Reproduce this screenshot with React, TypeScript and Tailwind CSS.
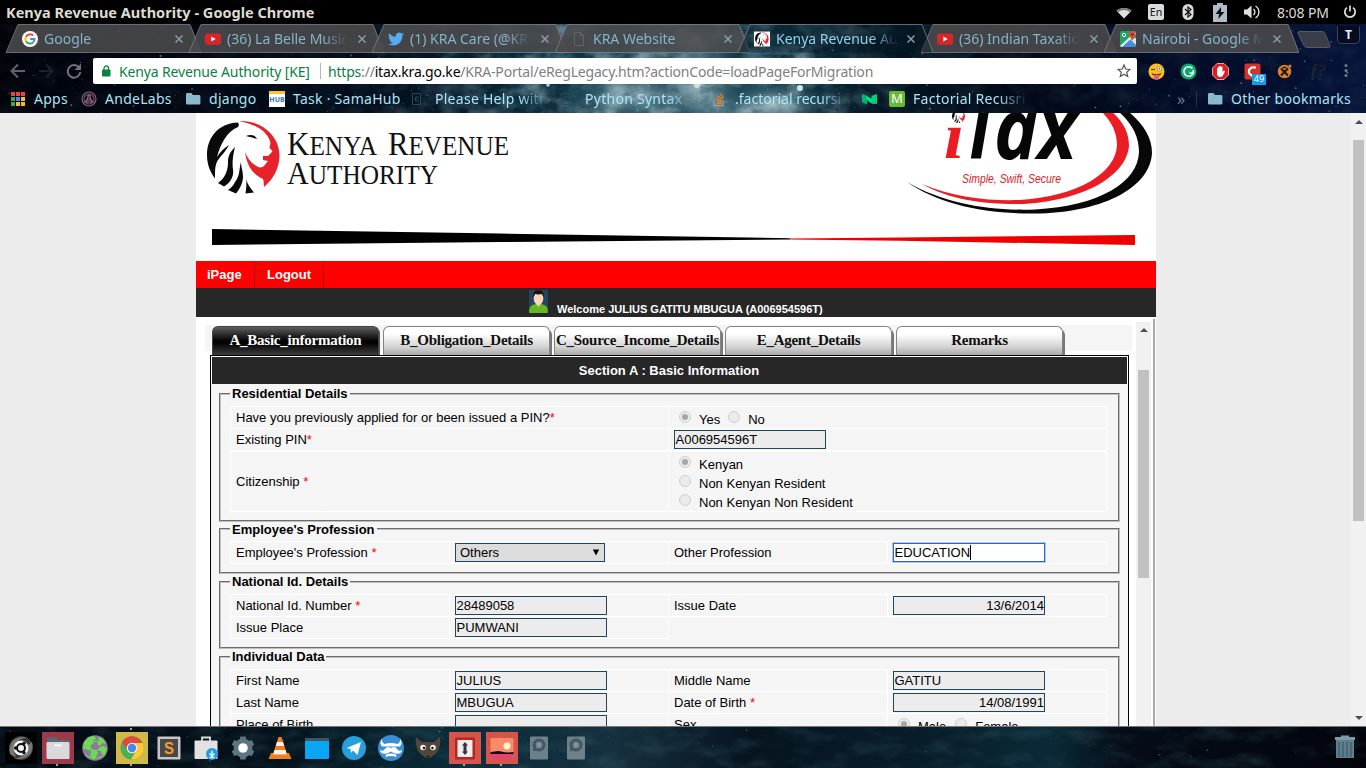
import React from "react";

type Kids = { children?: React.ReactNode };

const UI = "font-['Noto_Sans','Open_Sans',sans-serif]";

function makeStars(count: number, w: number, h: number, seed: number) {
  let s = seed;
  const rnd = () => {
    s = (s * 16807) % 2147483647;
    return s / 2147483647;
  };
  return Array.from({ length: count }, () => ({
    x: rnd() * w,
    y: rnd() * h,
    r: 0.3 + rnd() * rnd() * 0.9,
    o: 0.15 + rnd() * 0.55,
  }));
}

const TOP_STARS = makeStars(420, 1366, 89, 77);
const DOCK_STARS = makeStars(90, 1366, 41, 913);

function SkyTop() {
  return (
    <svg className="absolute inset-0" width="1366" height="89" viewBox="0 0 1366 89">
      <defs>
        <linearGradient id="sky" x1="0" x2="1" y1="0" y2="0">
          <stop offset="0" stopColor="#01030a" />
          <stop offset="0.28" stopColor="#030d1c" />
          <stop offset="0.38" stopColor="#0a2838" />
          <stop offset="0.48" stopColor="#1b4352" />
          <stop offset="0.57" stopColor="#113444" />
          <stop offset="0.65" stopColor="#041422" />
          <stop offset="0.75" stopColor="#020917" />
          <stop offset="0.88" stopColor="#030c28" />
          <stop offset="1" stopColor="#061338" />
        </linearGradient>
        <radialGradient id="glow">
          <stop offset="0" stopColor="#d5e7ea" stopOpacity="0.95" />
          <stop offset="0.4" stopColor="#86a9b3" stopOpacity="0.6" />
          <stop offset="1" stopColor="#2c5564" stopOpacity="0" />
        </radialGradient>
        <filter id="noise" x="0" y="0" width="100%" height="100%">
          <feTurbulence type="fractalNoise" baseFrequency="0.035 0.05" numOctaves="5" seed="8" />
          <feColorMatrix values="0 0 0 0 0.45  0 0 0 0 0.63  0 0 0 0 0.7  2.2 0 0 0 -0.9" />
        </filter>
        <filter id="shade" x="0" y="0" width="100%" height="100%">
          <feTurbulence type="fractalNoise" baseFrequency="0.05 0.07" numOctaves="5" seed="31" />
          <feColorMatrix values="0 0 0 0 0.02  0 0 0 0 0.09  0 0 0 0 0.13  3 0 0 0 -1.4" />
        </filter>
        <linearGradient id="fade" x1="0" x2="1" y1="0" y2="0">
          <stop offset="0.25" stopColor="#fff" stopOpacity="0.06" />
          <stop offset="0.4" stopColor="#fff" stopOpacity="0.6" />
          <stop offset="0.58" stopColor="#fff" stopOpacity="0.75" />
          <stop offset="0.66" stopColor="#fff" stopOpacity="0.1" />
          <stop offset="1" stopColor="#fff" stopOpacity="0.06" />
        </linearGradient>
        <mask id="mask">
          <rect width="1366" height="89" fill="url(#fade)" />
        </mask>
      </defs>
      <rect width="1366" height="89" fill="url(#sky)" />
      <ellipse cx="635" cy="74" rx="75" ry="26" fill="url(#glow)" opacity="0.85" />
      <ellipse cx="703" cy="62" rx="42" ry="48" fill="url(#glow)" />
      <ellipse cx="690" cy="18" rx="55" ry="30" fill="url(#glow)" opacity="0.6" />
      <ellipse cx="775" cy="80" rx="60" ry="26" fill="url(#glow)" opacity="0.85" />
      <rect width="1366" height="89" filter="url(#noise)" mask="url(#mask)" />
      <rect width="1366" height="89" filter="url(#shade)" mask="url(#mask)" />
      {TOP_STARS.map((s, i) => (
        <circle key={i} cx={s.x} cy={s.y} r={s.r} fill="#8fc4ea" opacity={s.o} />
      ))}
      <circle cx="800" cy="64" r="3" fill="#e8fbff" opacity="0.85" />
      <circle cx="548" cy="61" r="1.8" fill="#d4f2ff" opacity="0.8" />
      <circle cx="697" cy="61" r="3" fill="#fff" opacity="0.6" />
    </svg>
  );
}

function SkyDock() {
  return (
    <svg className="absolute inset-0" width="1366" height="41" viewBox="0 0 1366 41">
      <defs>
        <linearGradient id="dock" x1="0" x2="1" y1="0" y2="0">
          <stop offset="0" stopColor="#030a12" />
          <stop offset="0.2" stopColor="#04121c" />
          <stop offset="0.33" stopColor="#0a2b38" />
          <stop offset="0.45" stopColor="#16303f" />
          <stop offset="0.55" stopColor="#06141f" />
          <stop offset="0.68" stopColor="#081d2a" />
          <stop offset="0.77" stopColor="#0a2a37" />
          <stop offset="0.82" stopColor="#050d18" />
          <stop offset="1" stopColor="#02040b" />
        </linearGradient>
        <filter id="noise2" x="0" y="0" width="100%" height="100%">
          <feTurbulence type="fractalNoise" baseFrequency="0.03 0.07" numOctaves="4" seed="21" />
          <feColorMatrix values="0 0 0 0 0.13  0 0 0 0 0.3  0 0 0 0 0.36  2 0 0 0 -0.9" />
        </filter>
      </defs>
      <rect width="1366" height="41" fill="url(#dock)" />
      <rect width="1366" height="41" filter="url(#noise2)" opacity="0.2" />
      {DOCK_STARS.map((s, i) => (
        <circle key={i} cx={s.x} cy={s.y} r={s.r} fill="#86a6b0" opacity={s.o * 0.7} />
      ))}
    </svg>
  );
}

/* ---------- small icons ---------- */

function GoogleIcon() {
  return (
    <svg width="16" height="16" viewBox="0 0 16 16">
      <circle cx="8" cy="8" r="8" fill="#fff" />
      <g fill="none" strokeWidth="2">
        <path d="M11.2 4.6A4.6 4.6 0 0 0 4 5.8" stroke="#ea4335" />
        <path d="M4 5.8a4.6 4.6 0 0 0 0 4.5" stroke="#fbbc05" />
        <path d="M4 10.3a4.6 4.6 0 0 0 7.1 1.1" stroke="#34a853" />
        <path d="M8.2 8h4.3a4.6 4.6 0 0 1-1.4 3.4" stroke="#4285f4" />
      </g>
    </svg>
  );
}

function YoutubeIcon() {
  return (
    <svg width="16" height="16" viewBox="0 0 16 16">
      <rect x="0" y="2.4" width="16" height="11.4" rx="2.2" fill="#d9252a" />
      <path d="M6.3 5.4v5.2l4.4-2.6z" fill="#fff" />
    </svg>
  );
}

function TwitterIcon() {
  return (
    <svg width="16" height="16" viewBox="0 0 24 24" fill="#55acee">
      <path d="M23.9 4.6c-.9.4-1.8.7-2.8.8 1-.6 1.8-1.6 2.2-2.7-1 .6-2 1-3.1 1.2a4.9 4.9 0 0 0-8.4 4.5C7.700 8.200 4.100 6.200 1.700 3.200a4.900 4.900 0 0 0 1.500 6.500c-.8 0-1.600-.2-2.200-.6v.1c0 2.400 1.700 4.400 3.900 4.800-.7.2-1.500.2-2.200.1.6 2 2.400 3.400 4.600 3.400A9.900 9.900 0 0 1 0 19.500 14 14 0 0 0 7.500 21.700c9.100 0 14-7.500 14-14v-.6c1-.7 1.800-1.600 2.400-2.500z" />
    </svg>
  );
}

function PageIcon() {
  return (
    <svg width="16" height="16" viewBox="0 0 16 16" fill="none" stroke="#66605f">
      <path d="M3.500 1.500h6l3 3v10h-9zM9.500 1.500v3h3" />
    </svg>
  );
}

function LionShape() {
  return (
    <>
      <path d="M31 1.500C12 2 0 16 0 34c0 9 3 17 8 23.500C8 50 8 46 9.500 42 12 36 18 32 22 24c-5 3-9 7-12 12C13 24 20 10 31 6l1-2z" fill="#0a0a0a" />
      <path d="M28 26C22 32 21 36 21 41 21 50 18 57 11 62l6 3.500c7-4 10-11 9-17-1-8 0-14 2-22.500z" fill="#0a0a0a" />
      <path d="M34 41c-2 7-1 14-6 20-2 4-4 6-7 8l8 3.500c5-6 7-12 7-17 0-6-2-9-2-14.500z" fill="#0a0a0a" />
      <path d="M39 58c1 5 0 10-.5 14.500l8.500-1c-4-5-7-9-8-13.500z" fill="#0a0a0a" />
      <path d="M39 15c5-2 9-1 11 3-3-1-7-2-11-3z" fill="#0a0a0a" />
      <path d="M32 0C54-1 72 14 72.500 34c0 13-6 24-15.500 32-.5-3 0-5-1-8-9-4-16-12-18-27 2 5 5 10 10 13 3 3 7 3 9 1l4-5-5-1v-4h5l3-3 1.500-2-3-3 1-5C61 12 52 4 32 0z" fill="#e8222b" />
    </>
  );
}

function KraFavicon() {
  return (
    <svg width="16" height="16" viewBox="-6 -4 86 80">
      <rect x="-6" y="-4" width="86" height="80" fill="#fff" />
      <LionShape />
    </svg>
  );
}

function MapsIcon() {
  return (
    <svg width="16" height="16" viewBox="0 0 16 16">
      <rect width="16" height="16" rx="1.500" fill="#1fa463" />
      <path d="M1 16L9 8l7 7-1 1z" fill="#4788f0" />
      <path d="M0 15L15 1l1 2L2 16z" fill="#f5f5f5" />
      <path d="M10 8.500l6 5.500V7z" fill="#dfe3e6" />
      <path d="M12.300 0a3.500 3.500 0 0 0-3.400 3.600c0 2.400 2.800 3.300 3.300 7.200.6-3.900 3.400-4.800 3.400-7.200A3.400 3.400 0 0 0 12.300 0z" fill="#dd4b3e" />
      <circle cx="12.300" cy="3.600" r="1.200" fill="#7c1d17" />
      <circle cx="4" cy="4" r="1.700" fill="none" stroke="#fff" />
    </svg>
  );
}

function Folder() {
  return (
    <svg width="15" height="14" viewBox="0 0 15 14" fill="#8ab8cc">
      <path d="M0 2.500C0 1.700.6 1 1.400 1h4l1.500 2H13c.8 0 1.400.6 1.400 1.400V11c0 .8-.6 1.500-1.400 1.500H1.400C.6 12.500 0 11.800 0 11z" />
    </svg>
  );
}

/* ---------- system bar ---------- */

function SystemBar() {
  return (
    <div className="flex h-6 items-center bg-black pl-[6px] text-[#dfdbd2]">
      <span className="w-[1109px] text-[14.5px] leading-[23px] font-bold tracking-[0.020px] whitespace-nowrap">
        Kenya Revenue Authority - Google Chrome
      </span>
      <svg width="18" height="12" viewBox="0 0 18 12" fill="#dfdfdf" className="mt-px">
        <path d="M9 11.500L1.500 3.700C5.500 0 12.500 0 16.500 3.700z" />
        <path d="M1.500 3.700C5.500 0 12.500 0 16.500 3.700L15 5.200C11 2.200 7 2.200 3 5.200z" fill="#777" />
      </svg>
      <span className="ml-[15px] flex h-4 w-4 items-center justify-center rounded-[2px] bg-[#d8dcde] text-[10.500px] leading-4 text-[#111]">En</span>
      <svg width="12" height="16" viewBox="0 0 12 16" className="ml-[18px]">
        <rect x=".5" width="11" height="16" rx="5.500" fill="#dadedf" />
        <path d="M3 5l6 5.500-3 2.500V3l3 2.500L3 11" fill="none" stroke="#111" strokeWidth="1.200" />
      </svg>
      <svg width="14" height="19" viewBox="0 0 14 19" className="ml-[19px]">
        <path d="M4 0h6v2h4v17H0V2h4z" fill="#aebdc5" />
        <path d="M8 4L2.500 11H6l-.7 5L11.500 9H8z" fill="#111" />
      </svg>
      <svg width="16" height="14" viewBox="0 0 16 14" className="ml-[17px]" fill="#dfdfdf">
        <path d="M0 4.500h3L7.500 0.500v13L3 9.500H0z" />
        <path d="M9.500 4a4 4 0 0 1 0 6M11.500 1a7 7 0 0 1 0 12" fill="none" stroke="#dfdfdf" strokeWidth="1.400" />
      </svg>
      <span className="ml-[17px] w-[66px] text-[14px] leading-[23px] tracking-[-0.100px] whitespace-nowrap">8:08 PM</span>
      <svg width="14" height="14" viewBox="0 0 14 14" fill="none" stroke="#dfdfdf" strokeWidth="1.700">
        <path d="M4 2.600a5.200 5.200 0 1 0 6 0M7 .5v6" />
      </svg>
    </div>
  );
}

/* ---------- browser tabs ---------- */

function BrowserTab({ icon, title, active }: { icon: React.ReactNode; title: string; active?: boolean }) {
  return (
    <div className={active ? "relative z-20 mr-[-12px] h-[29px] w-[195px] shrink-0" : "relative z-10 mr-[-12px] h-[29px] w-[195px] shrink-0"}>
      <svg className="absolute inset-0" width="195" height="29" viewBox="0 0 195 29">
        <path
          d="M0 28.500Q1 27 12 .5H184Q185 1 195 28.500z"
          fill={active ? "#061a26" : "#4b4b4d"}
          fillOpacity={active ? 0.45 : 0.88}
        />
        <path d={active ? "M0 28.500L12 .5H184L195 28.500" : "M0 28.500L12 .5H184L195 28.500z"} fill="none" stroke="#82868a" strokeOpacity=".75" />
      </svg>
      <div className="relative flex h-[29px] items-center pl-4">
        {icon}
        <span
          className={
            (active ? "text-[#93cfe6] " : "text-[#86b3c6] ") +
            "ml-[6px] h-[22px] w-[122px] overflow-hidden text-[14px] leading-[21px] whitespace-nowrap [mask-image:linear-gradient(90deg,#000_78%,transparent_99%)]"
          }
        >
          {title}
        </span>
        <svg className="ml-[9px]" width="8" height="8" viewBox="0 0 8 8" stroke="#8a9ca6" strokeWidth="1.500">
          <path d="M.5.5l7 7M7.500.5l-7 7" />
        </svg>
      </div>
    </div>
  );
}

function TabStrip() {
  return (
    <div className="relative flex h-[29px] pl-[6px]">
      <BrowserTab icon={<GoogleIcon />} title="Google" />
      <BrowserTab icon={<YoutubeIcon />} title="(36) La Belle Music" />
      <BrowserTab icon={<TwitterIcon />} title="(1) KRA Care (@KR" />
      <BrowserTab icon={<PageIcon />} title="KRA Website" />
      <BrowserTab active icon={<KraFavicon />} title="Kenya Revenue Au" />
      <BrowserTab icon={<YoutubeIcon />} title="(36) Indian Taxatio" />
      <BrowserTab icon={<MapsIcon />} title="Nairobi - Google M" />
      <svg className="ml-[9px]" width="36" height="29" viewBox="0 0 36 29">
        <path d="M3 7.500h23q2 0 3 2l5 12q.500 2-1.500 2H11q-2 0-3-2L2 9.500q-.500-2 1-2z" fill="#3a3e49" stroke="#555a66" />
      </svg>
      <div className="mt-[2px] ml-[5px] flex h-[18px] w-[23px] items-center justify-center rounded-b-[5px] border border-t-0 border-[#3d4456] bg-[#050c22] text-[12px] font-bold text-[#e8f2f8]">
        T
      </div>
    </div>
  );
}

/* ---------- toolbar ---------- */

function Toolbar() {
  return (
    <div className="relative flex h-8 items-center pt-[4px]">
      <svg className="ml-[10px]" width="75" height="18" viewBox="0 0 75 18" fill="none" strokeWidth="2">
        <path d="M15 9H2M8 2.500L1.500 9 8 15.500" stroke="#5f6366" />
        <path d="M29 9h13M36 2.500L42.500 9 36 15.500" stroke="#1d2124" />
        <path d="M69 5.500A6.300 6.300 0 1 0 70.300 10" stroke="#6f7376" />
        <path d="M71 1.500v6.500h-6.500z" fill="#6f7376" />
      </svg>
      <div className="ml-2 flex h-[26px] w-[1044px] items-center rounded-[2px] bg-white pl-[9px] text-[14px] whitespace-nowrap">
        <svg width="9" height="12" viewBox="0 0 9 12">
          <rect y="4.500" width="8.500" height="7" rx=".8" fill="#0b8043" />
          <path d="M2 5V3.200a2.250 2.250 0 0 1 4.500 0V5" fill="none" stroke="#0b8043" strokeWidth="1.300" />
        </svg>
        <span className="ml-2 w-[201px] tracking-[-0.140px] text-[#0b8043]">Kenya Revenue Authority [KE]</span>
        <span className="mr-[7px] h-4 w-px bg-[#b5b5b5]" />
        <span className="tracking-[-0.200px] text-[#808080]">
          <span className="text-[#0b8043]">https</span>://<span className="text-black">itax.kra.go.ke</span>/KRA-Portal/eRegLegacy.htm?actionCode=loadPageForMigration
        </span>
        <svg className="mr-[6px] ml-auto" width="14" height="14" viewBox="0 0 14 14" fill="none" stroke="#555" strokeWidth="1.200">
          <path d="M7 1l1.700 4 4.300.4-3.300 2.800 1 4.200L7 10.200l-3.700 2.200 1-4.200L1 5.400 5.300 5z" />
        </svg>
      </div>
      <div className="flex w-[229px] items-center pl-[11px]">
        <svg width="17" height="17" viewBox="0 0 17 17">
          <circle cx="8.500" cy="8.500" r="8" fill="#fcc21b" />
          <path d="M3.500 10c3 1.500 7 1.500 10 0-.5 2-1.500 3-5 3s-4.500-1-5-3z" fill="#6b3a1a" />
          <path d="M6 12h5v2.500a2.500 2.500 0 0 1-5 0z" fill="#f0548e" />
          <circle cx="11.500" cy="5.800" r="2.300" fill="#fff" stroke="#7a5a20" strokeWidth=".6" />
          <circle cx="11.500" cy="5.800" r=".8" fill="#333" />
          <path d="M3 6.500h4" stroke="#5a3b1c" strokeWidth="1.200" />
        </svg>
        <svg className="ml-[15px]" width="17" height="17" viewBox="0 0 17 17">
          <circle cx="8.500" cy="8.500" r="8" fill="#12a66f" />
          <path d="M12.500 5.500a4.800 4.800 0 1 0 .8 4.500H9.500M13.300 7v3" fill="none" stroke="#eafff6" strokeWidth="1.600" />
        </svg>
        <svg className="ml-[15px]" width="17" height="17" viewBox="0 0 17 17">
          <path d="M5 .5h7L16.500 5v7L12 16.500H5L.5 12V5z" fill="#df1b23" stroke="#f5c9c9" strokeWidth=".8" />
          <path d="M5 8.500V5h1.300v2.500V3.500h1.400v3.500V3h1.400v4V3.800h1.400V9l1.200-1.500 1.300.7-2 4.300-1.500 1.500H7L5 12z" fill="#fff" />
        </svg>
        <div className="relative ml-[15px] h-[17px] w-[17px]">
          <svg width="17" height="17" viewBox="0 0 17 17">
            <rect x=".5" y=".5" width="16" height="16" rx="2" fill="#d6322c" />
            <path d="M12 4.500H7.500L5 7v3l2.500 2.500H12" fill="none" stroke="#fff" strokeWidth="2.200" />
          </svg>
          <span className="absolute top-[11px] left-[8px] flex h-[11px] w-[14px] items-center justify-center bg-[#139bea] text-[9px] text-white">49</span>
        </div>
        <svg className="ml-[16px]" width="16" height="16" viewBox="0 0 16 16">
          <circle cx="7.500" cy="8.500" r="6.800" fill="#d9822b" />
          <circle cx="13" cy="3" r="1.500" fill="#d9822b" />
          <path d="M4 5.500l7 7M11 5.500l-7 7" stroke="#1b130c" strokeWidth="2" />
          <path d="M5.500 4.500h4" stroke="#1b130c" strokeWidth="1.500" />
        </svg>
        <span className="ml-[18px] w-[22px] font-['Liberation_Serif',serif] text-[17px] leading-4 font-bold tracking-[1px] text-[#20252f] italic">f?</span>
        <svg width="20" height="16" viewBox="0 0 20 16" fill="#747c80">
          <circle cx="13" cy="2.500" r="1.500" />
          <circle cx="13" cy="7.500" r="1.500" />
          <circle cx="13" cy="12.500" r="1.500" />
        </svg>
      </div>
    </div>
  );
}

/* ---------- bookmarks ---------- */

const LABEL = "text-[14px] leading-[22px] whitespace-nowrap text-[#abe4f7] tracking-[0.270px]";
const FADED = " overflow-hidden [mask-image:linear-gradient(90deg,#000_75%,transparent_100%)]";

function BookmarksBar() {
  const c = ["#e8453c", "#e8453c", "#e8453c", "#3aa757", "#4688f1", "#f9bb2d", "#3aa757", "#f9bb2d", "#f9bb2d"];
  return (
    <div className="relative flex h-7 items-center pl-[11px]">
      <div className="flex w-[70px] items-center gap-[9px]">
        <div className="grid w-[14px] grid-cols-3 gap-px">
          {c.map((col, i) => (
            <span key={i} className="h-1 w-1" style={{ backgroundColor: col }} />
          ))}
        </div>
        <span className={LABEL}>Apps</span>
      </div>
      <div className="flex w-[105px] items-center gap-2">
        <svg width="16" height="16" viewBox="0 0 16 16" fill="none" stroke="#8a6684" strokeWidth="1.200">
          <circle cx="8" cy="8" r="7" />
          <circle cx="8" cy="8" r="5" stroke="#6e4d6c" />
          <path d="M7 4v3l-2.500 4h7L9 7V4zM6.500 9h3" stroke="#ad6f86" />
        </svg>
        <span className={LABEL}>AndeLabs</span>
      </div>
      <div className="flex w-[83px] items-center gap-2">
        <Folder />
        <span className={LABEL}>django</span>
      </div>
      <div className="flex w-[142px] items-center gap-2">
        <span className="flex h-4 w-4 items-center justify-center border-t-[3px] border-[#ffc817] bg-white text-[7px] font-bold text-[#3276b8]">HUB</span>
        <span className={LABEL}>Task · SamaHub</span>
      </div>
      <div className="flex w-[149px] items-center gap-2">
        <svg width="16" height="16" viewBox="0 0 16 16" fill="none" stroke="#2b4553">
          <path d="M1.500 2.500h8v11h-8zM8 6H4.500v4H8M12 13h3" />
        </svg>
        <span className={LABEL + FADED + " w-[112px]"}>Please Help with</span>
      </div>
      <div className="flex w-[152px] items-center gap-[9px]">
        <svg width="16" height="16" viewBox="0 0 16 16" fill="none" stroke="#2f4b5b">
          <path d="M1.500 2.500h8v11h-8zM8 6H4.500v4H8M12 13h3" />
        </svg>
        <span className={LABEL + FADED + " w-[108px]"}>Python Syntax -</span>
      </div>
      <div className="flex w-[150px] items-center gap-[7px]">
        <svg width="16" height="16" viewBox="0 0 16 16" fill="none">
          <path d="M2 9.500v5h9v-5" stroke="#9aa0a5" strokeWidth="1.300" />
          <path d="M4 12.500h5.500M4 10.300l5.500.700M4.500 7.800l5 2M6 5l4.300 3.300M8.500 2.500l3 4.500" stroke="#e8801c" strokeWidth="1.300" />
        </svg>
        <span className={LABEL + FADED + " w-[112px] tracking-normal"}>.factorial recursi</span>
      </div>
      <svg width="16" height="16" viewBox="0 0 16 16">
        <path d="M0 3l5 2v8.500L.600 11.500Q0 11.200 0 10.500z" fill="#00b46f" />
        <path d="M3.500 4.200L10 8l3 5-3.500-.500L5 9z" fill="#00e587" />
        <path d="M9.500 5L15 3v10l-5.500-1z" fill="#00cf7b" />
      </svg>
      <div className="ml-[11px] flex w-[288px] items-center gap-2">
        <span className="flex h-4 w-4 items-center justify-center rounded-[2px] bg-[#67ba35] text-[13px] text-white">M</span>
        <span className={LABEL + FADED + " w-[114px]"}>Factorial Recusri</span>
      </div>
      <span className="w-[19px] text-[16px] leading-5 text-[#777c82]">»</span>
      <span className="h-4 w-px bg-[#2c3344]" />
      <div className="ml-[11px] flex items-center gap-2">
        <Folder />
        <span className={LABEL}>Other bookmarks</span>
      </div>
    </div>
  );
}

/* ---------- page banner ---------- */

function Banner() {
  return (
    <svg className="block" width="960" height="148" viewBox="196 113 960 148">
      <rect x="196" y="113" width="960" height="148" fill="#fff" />
      <g transform="translate(207 121)">
        <LionShape />
      </g>
      <g fill="#111" fontFamily="Liberation Serif, serif">
        <text x="287" y="155" fontSize="33" textLength="90" lengthAdjust="spacingAndGlyphs">
          K<tspan fontSize="27">ENYA</tspan>
        </text>
        <text x="388" y="155" fontSize="33" textLength="121" lengthAdjust="spacingAndGlyphs">
          R<tspan fontSize="27">EVENUE</tspan>
        </text>
        <text x="287" y="184" fontSize="32" textLength="151" lengthAdjust="spacingAndGlyphs">
          A<tspan fontSize="27">UTHORITY</tspan>
        </text>
      </g>
      <path d="M212 229L500 233.500 790 238.300V239.500L500 242 212 245z" fill="#000" />
      <path d="M790 238.400L900 237.500 1135 235V245L900 240.800 790 239.600z" fill="#e00" />
      <path d="M907 182C945 204 990 211 1035 209.500C1100 206 1138 182 1139 152C1139 138 1133 124 1119 112H1129C1144 125 1152 138 1152 153C1150 190 1098 213 1035 213.500C985 214 938 204 907 182z" fill="#080808" />
      <path d="M922 184C955 198 990 201 1020 200C1080 196 1116 172 1117 145C1117 132 1111 121 1102 112H1112C1124 122 1129 134 1129 146C1126 178 1080 201 1022 204C985 204.500 950 200 922 184z" fill="#ec1c24" />
      <text x="944" y="158" fontFamily="Liberation Serif, serif" fontStyle="italic" fontWeight="bold" fontSize="66" fill="#ec1c24" textLength="20" lengthAdjust="spacingAndGlyphs">
        ı
      </text>
      <g fontFamily="Open Sans, sans-serif" fontStyle="italic" fontWeight="bold" fontSize="85" fill="#060606">
        <text x="962" y="159" textLength="36" lengthAdjust="spacingAndGlyphs">T</text>
        <text x="994" y="159" textLength="83" lengthAdjust="spacingAndGlyphs">ax</text>
      </g>
      <g transform="translate(952 110) scale(.18)">
        <LionShape />
      </g>
      <text x="962" y="183" fontFamily="Liberation Sans Narrow, Liberation Sans, sans-serif" fontStyle="italic" fontSize="12.500" fill="#dc2027" textLength="99" lengthAdjust="spacingAndGlyphs">
        Simple, Swift, Secure
      </text>
    </svg>
  );
}

function Avatar() {
  return (
    <svg width="19" height="23" viewBox="0 0 19 23">
      <rect width="19" height="23" fill="#24435c" />
      <path d="M.3 23c-.8-5 1.200-8 6.200-9h6c5 1 7 4 6.200 9z" fill="#62b81e" />
      <path d="M6.500 13h6l-3 4z" fill="#f2c29b" />
      <ellipse cx="9.500" cy="8.500" rx="4.800" ry="6.300" fill="#fad7b8" />
      <path d="M4.500 7C4 2 6 .3 9.500.3S15 2 14.500 7L13 4C11 4.500 8 4.500 6 4z" fill="#1a120d" />
    </svg>
  );
}

/* ---------- form ---------- */

const TAB_BASE = "relative mr-[4px] h-[29px] w-[167px] shrink-0 rounded-t-[6px] border border-b-0 pt-[3px] text-center font-['Liberation_Serif',serif] text-[15px] leading-[21px] font-bold tracking-[-0.250px] whitespace-nowrap ";
const TAB_ON = "border-[#444] bg-[linear-gradient(#5e5e5e,#0a0a0a_45%,#000_55%,#3d3d3d)] text-white shadow-[1px_1px_0_#555]";
const TAB_OFF = "border-[#848484] bg-[linear-gradient(#fff_25%,#d4d4d4_70%,#a9a9a9)] text-[#111] shadow-[2px_3px_0_#777]";

function FormTab({ on, children }: Kids & { on?: boolean }) {
  return <div className={TAB_BASE + (on ? TAB_ON : TAB_OFF)}>{children}</div>;
}

function Field({ value, right, focus }: { value: string; right?: boolean; focus?: boolean }) {
  return (
    <div
      className={
        "mt-px flex h-[19px] w-[152px] items-center border leading-[17px] " +
        (focus ? "border-[#2a66c8] bg-white shadow-[0_0_0_1px_#a9c8f2] " : "border-[#1f455f] bg-[#ececec] ") +
        (right ? "justify-end" : "pl-[0.500px]")
      }
    >
      {value}
      {focus && <span className="h-[15px] w-px bg-black" />}
    </div>
  );
}

function Radio({ on }: { on?: boolean }) {
  return (
    <span className="flex h-3 w-3 items-center justify-center rounded-full border border-[#cfcfcf] bg-[#ebebeb]">
      {on && <span className="h-[6px] w-[6px] rounded-full bg-[#a6a6a6]" />}
    </span>
  );
}

function RadioLabel({ on, children }: Kids & { on?: boolean }) {
  return (
    <span className="flex h-[19px] items-start gap-2">
      <Radio on={on} />
      <span className="leading-[17px]">{children}</span>
    </span>
  );
}

function Cell({ children, className = "" }: Kids & { className?: string }) {
  return <div className={"flex border-t border-l border-white pl-[5px] " + className}>{children}</div>;
}

function Label({ children, star, tight }: Kids & { star?: boolean; tight?: boolean }) {
  return (
    <Cell>
      <span className="pt-[2px] leading-[17px]">
        {children}
        {star && <span className="text-[#f00]">{tight ? "*" : " *"}</span>}
      </span>
    </Cell>
  );
}

function Group({ title, children, className = "", low }: Kids & { title: string; className?: string; low?: boolean }) {
  return (
    <fieldset className={"mr-2 ml-[8px] pt-1 pr-[10px] pb-2 pl-[9px] [border:2px_groove_#c0c0c0] " + className}>
      <legend className={low ? "h-4 px-[2px] pt-px leading-4 font-bold" : "h-4 px-[2px] leading-4 font-bold"}>{title}</legend>
      {children}
    </fieldset>
  );
}

const GRID = "grid grid-cols-[219px_219px_219px_219px] auto-rows-[22px] border-r border-b border-white w-[877px]";

function FormBody() {
  return (
    <div className="h-[371px] w-[919px] overflow-hidden border-t border-r border-l border-black bg-[#f5f5f5]">
      <div className="mb-[2px] h-[28px] border border-b-0 border-white bg-[#272727] pr-px text-center leading-[27px] font-bold text-white">
        Section A : Basic Information
      </div>
      <Group title="Residential Details">
        <div className="w-[877px] border-r border-b border-white">
          <div className="grid h-[22px] grid-cols-2">
            <Label star tight>Have you previously applied for or been issued a PIN?</Label>
            <Cell className="gap-[8px] pt-[4px] pl-[10px]">
              <RadioLabel on>Yes</RadioLabel>
              <RadioLabel>No</RadioLabel>
            </Cell>
          </div>
          <div className="grid h-[22px] grid-cols-2">
            <Label star tight>Existing PIN</Label>
            <Cell>
              <Field value="A006954596T" />
            </Cell>
          </div>
          <div className="grid h-[61px] grid-cols-2 border-t border-white">
            <Cell className="items-center pb-[2px]">
              <span>
                Citizenship <span className="text-[#f00]">*</span>
              </span>
            </Cell>
            <Cell className="flex-col pt-[4px] pl-[10px]">
              <RadioLabel on>Kenyan</RadioLabel>
              <RadioLabel>Non Kenyan Resident</RadioLabel>
              <RadioLabel>Non Kenyan Non Resident</RadioLabel>
            </Cell>
          </div>
        </div>
      </Group>
      <Group title="Employee's Profession" className="-mt-px" low>
        <div className={GRID}>
          <Label star>Employee's Profession</Label>
          <Cell>
            <div className="mt-px flex h-[19px] w-[150px] items-center justify-between border border-[#1f455f] bg-[#dcdcdc] pr-1 pl-1 leading-[17px]">
              <span>Others</span>
              <svg width="8" height="7" viewBox="0 0 8 7">
                <path d="M.800.500h6.400L4 6.500z" fill="#000" />
              </svg>
            </div>
          </Cell>
          <Label>Other Profession</Label>
          <Cell>
            <Field value="EDUCATION" focus />
          </Cell>
        </div>
      </Group>
      <Group title="National Id. Details">
        <div className={GRID}>
          <Label star>National Id. Number</Label>
          <Cell>
            <Field value="28489058" />
          </Cell>
          <Label>Issue Date</Label>
          <Cell>
            <Field value="13/6/2014" right />
          </Cell>
          <Label>Issue Place</Label>
          <Cell>
            <Field value="PUMWANI" />
          </Cell>
          <Cell className="col-span-2 -mr-px -mb-px bg-[#f5f5f5]" />
        </div>
      </Group>
      <Group title="Individual Data">
        <div className={GRID}>
          <Label>First Name</Label>
          <Cell>
            <Field value="JULIUS" />
          </Cell>
          <Label>Middle Name</Label>
          <Cell>
            <Field value="GATITU" />
          </Cell>
          <Label>Last Name</Label>
          <Cell>
            <Field value="MBUGUA" />
          </Cell>
          <Label star>Date of Birth</Label>
          <Cell>
            <Field value="14/08/1991" right />
          </Cell>
          <Label>Place of Birth</Label>
          <Cell>
            <Field value="" />
          </Cell>
          <Label>Sex</Label>
          <Cell className="gap-[9px] pt-[4px] pl-[10px]">
            <RadioLabel on>Male</RadioLabel>
            <RadioLabel>Female</RadioLabel>
          </Cell>
        </div>
      </Group>
    </div>
  );
}

function Arrow({ down }: { down?: boolean }) {
  return (
    <svg width="8" height="4" viewBox="0 0 8 4" fill="#505050">
      <path d={down ? "M0 0h8L4 4z" : "M0 4h8L4 0z"} />
    </svg>
  );
}

function Page() {
  return (
    <div className="flex h-[614px] overflow-hidden border-b border-[#777] bg-[#ececec] font-['Liberation_Sans',Arial,sans-serif] text-[13px] text-black">
      <div className="ml-[196px] w-[960px] bg-white">
        <Banner />
        <div className="flex h-[27px] bg-[#fe0000] leading-[27px] font-bold text-white">
          <span className="w-[59px] border-r border-[#b30000] pl-[11px]">iPage</span>
          <span className="w-[69px] border-r border-[#b30000] pl-3">Logout</span>
        </div>
        <div className="flex h-[29px] bg-[#272727] pt-[2px] pl-[333px]">
          <Avatar />
          <span className="ml-[9px] pt-[13px] text-[11px] leading-[13px] font-bold whitespace-nowrap text-white">
            Welcome JULIUS GATITU MBUGUA (A006954596T)
          </span>
        </div>
        <div className="flex h-[409px]">
          <div className="w-[940px] pt-2">
            <div className="ml-[9px] flex h-[30px] w-[927px] bg-[linear-gradient(#f5f5f5_0_26px,#fff_26px)] pt-px pl-[7px]">
              <FormTab on>A_Basic_information</FormTab>
              <FormTab>B_Obligation_Details</FormTab>
              <FormTab>
                <span className="-mx-2">C_Source_Income_Details</span>
              </FormTab>
              <FormTab>E_Agent_Details</FormTab>
              <FormTab>Remarks</FormTab>
            </div>
            <div className="relative pl-[14px]">
              <FormBody />
            </div>
          </div>
          <div className="mt-[5px] flex w-[15px] flex-col items-center bg-[#f1f1f1] pt-[6px]">
            <Arrow />
            <div className="mt-[38px] h-[208px] w-[11px] bg-[#c1c1c1]" />
          </div>
          <div className="mt-[2px] ml-[2px] w-[2px] bg-[#a9a9a9]" />
        </div>
      </div>
      <div className="ml-auto flex w-[15px] flex-col items-center bg-[#f1f1f1] pt-[7px] pb-[6px]">
        <Arrow />
        <div className="mt-4 h-[381px] w-[11px] bg-[#c1c1c1]" />
        <div className="mt-auto">
          <Arrow down />
        </div>
      </div>
    </div>
  );
}

/* ---------- dock ---------- */

function DockItem({ bg = "", dot, top, children }: Kids & { bg?: string; dot?: boolean; top?: boolean }) {
  return (
    <div className="relative flex h-[41px] w-[37px] shrink-0 items-center justify-center">
      <div className={"flex h-8 w-8 items-center justify-center " + bg}>
        <svg width="28" height="28" viewBox="0 0 28 28">
          {children}
        </svg>
      </div>
      {dot && <span className="absolute bottom-[2px] left-[17px] h-[2px] w-[2px] rounded-full bg-[#d5dadd]" />}
      {top && <span className="absolute top-[1px] left-[17px] h-[2px] w-[2px] rounded-full bg-[#d5dadd]" />}
    </div>
  );
}

function Parcel() {
  return (
    <>
      <rect x="5" y="2.500" width="18" height="23" rx="1" fill="#6b818b" />
      <circle cx="14" cy="11" r="5" fill="none" stroke="#46575f" strokeWidth="3" />
      <path d="M8 11h3v6H8z" fill="#46575f" />
      <circle cx="14" cy="11" r="2.300" fill="#81949c" />
    </>
  );
}

function Dock() {
  return (
    <div className="relative h-[41px] overflow-hidden">
      <SkyDock />
      <div className="relative flex pl-[2px]">
        <DockItem bg="bg-black">
          <circle cx="14" cy="14" r="12" fill="#3a3a3a" />
          <path d="M3 20C0 8 10 0 22 4c-8-1-15 4-15 13l2 6zM25 8c3 12-7 20-19 16 8 1 15-4 15-13z" fill="#777" />
          <circle cx="14" cy="14" r="7.500" fill="#f3f3f3" />
          <circle cx="14" cy="14" r="4" fill="none" stroke="#111" strokeWidth="2" />
          <circle cx="8.500" cy="14" r="1.700" fill="#111" />
          <circle cx="17" cy="9.300" r="1.700" fill="#111" />
          <circle cx="17" cy="18.700" r="1.700" fill="#111" />
        </DockItem>
        <DockItem bg="bg-[#9c3a4c]" dot>
          <path d="M3 3.500h9l2 2.500h11v6H3z" fill="#546c78" />
          <rect x="2.500" y="8" width="23" height="17" rx="1" fill="#d9d9d9" />
          <rect x="10.500" y="10.500" width="7" height="1.600" fill="#fff" />
        </DockItem>
        <DockItem>
          <circle cx="14" cy="14" r="12.800" fill="#8a7b9c" />
          <path d="M3 8l5-5 5-1 2 3-4 2 2 2-4 3 2 2-3 2-4-2-2 1zM10 15l5 1 2 3-4 7-4-3 1-4zM17 3l5 2 3 5-4-1-2 3-3-2 2-3zM19 13l4-1 3 3-2 5-3 1-1-4-3-1z" fill="#6bdc50" />
          <path d="M4 21q10 6 20 0M2 14q12 5 24 0M6 5q8 5 16 0" fill="none" stroke="#6bdc50" strokeWidth="1" />
        </DockItem>
        <DockItem bg="bg-[#cfba47]" dot top>
          <circle cx="14" cy="14" r="11.500" fill="#4caf50" />
          <path d="M14 14L4 8.300A11.500 11.500 0 0 1 24.400 9H14z" fill="#e8453c" />
          <path d="M4 8.300A11.500 11.500 0 0 1 24.400 9H14a5 5 0 0 0-4.800 6.500z" fill="#de4b3c" />
          <path d="M24.400 9A11.500 11.500 0 0 1 13 25.500L18.500 16 14 9z" fill="#fdc935" />
          <circle cx="14" cy="14" r="5.300" fill="#f3f3f3" />
          <circle cx="14" cy="14" r="4.200" fill="#4a86ee" />
        </DockItem>
        <DockItem>
          <rect x="2.500" y="2.500" width="23" height="23" rx="1" fill="#c6c6c6" />
          <rect x="5" y="5" width="18" height="18" fill="#484848" />
          <text x="9" y="20" fontSize="17" fontWeight="bold" fill="#f49b2c" fontFamily="Liberation Sans, sans-serif" textLength="10" lengthAdjust="spacingAndGlyphs">S</text>
        </DockItem>
        <DockItem>
          <path d="M10 7V3.500h8V7" fill="none" stroke="#ddd" strokeWidth="1.800" />
          <rect x="2.500" y="6.500" width="23" height="18.500" rx="1" fill="#e2e2e2" />
          <circle cx="20" cy="20" r="6" fill="#1b9de8" />
          <path d="M20 16.500v4M17.500 19.500L20 22l2.500-2.500M17.500 23.500h5" stroke="#fff" strokeWidth="1.300" fill="none" />
        </DockItem>
        <DockItem>
          <g fill="#5c7580">
            <circle cx="14" cy="14" r="9.500" />
            <rect x="11" y="2.500" width="6" height="23" rx="1" />
            <rect x="11" y="2.500" width="6" height="23" rx="1" transform="rotate(60 14 14)" />
            <rect x="11" y="2.500" width="6" height="23" rx="1" transform="rotate(120 14 14)" />
          </g>
          <circle cx="14" cy="14" r="4.800" fill="#fff" />
        </DockItem>
        <DockItem>
          <path d="M12.500 3h3L21 20H7z" fill="#f57f17" />
          <path d="M11 8h6l1.200 4H9.800zM8.500 16h11l1 3.500h-13z" fill="#f3f3f3" />
          <path d="M5 19h18l2.500 6h-23z" fill="#f57f17" />
          <path d="M7.500 19h13v1.500h-13z" fill="#eee" />
        </DockItem>
        <DockItem>
          <rect x="2" y="4" width="24" height="21" rx=".8" fill="#08a6f5" />
          <path d="M2 4h24v3H2z" fill="#3f5560" />
        </DockItem>
        <DockItem>
          <circle cx="14" cy="14" r="12" fill="#26a0dc" />
          <path d="M6.500 14L21 8l-3.500 13-4.500-4.500-2 2.500-.5-4z" fill="#fff" />
        </DockItem>
        <DockItem>
          <circle cx="14" cy="14" r="13" fill="#398fd6" />
          <path d="M7.500 10Q14 8 20.500 10Q23.500 8.500 23 4.500Q26 9 23 12.500H5Q2 9 5 4.500Q4.500 8.500 7.500 10z" fill="#fff" />
          <path d="M14 14c-3-2-5-1-6.500 1.500C6 17.500 4 17 3 15.500 3 20 8 21.500 14 17.500c6 4 11 2.500 11-2-1 1.500-3 2-4.500 0C19 13 17 12 14 14z" fill="#fff" />
          <path d="M9 20.500q5-2 10 0l.5 2.500q-5.500-2-11 0z" fill="#fff" />
        </DockItem>
        <DockItem>
          <path d="M2 3l6 5h12l6-5c1 8-1 14-6 18l-4 3h-4l-4-3C3 17 1 11 2 3z" fill="#51463b" />
          <circle cx="9" cy="13.500" r="2.800" fill="#f0ece6" />
          <circle cx="19" cy="13.500" r="2.800" fill="#f0ece6" />
          <circle cx="10" cy="14" r="1.200" fill="#111" />
          <circle cx="18.500" cy="14" r="1.200" fill="#111" />
          <path d="M12 22h4l-2 2z" fill="#111" />
        </DockItem>
        <DockItem bg="bg-[#d5544c]" dot>
          <rect x="4" y="3.500" width="20" height="22" rx="1" fill="#b9261e" />
          <rect x="6.500" y="6" width="15" height="17" fill="#eee" />
          <path d="M14 8l3 3.500H15.500v6H17L14 21l-3-3.500h1.500v-6H11z" fill="#353535" />
        </DockItem>
        <DockItem bg="bg-[#d5544c]" dot>
          <rect x="2.500" y="4" width="23" height="20" rx="1" fill="#fb8a68" />
          <circle cx="19" cy="12" r="3.500" fill="#fff5d0" />
          <path d="M2.500 18l8-1 8 1.500 7-.5v3h-23z" fill="#111" />
          <path d="M2.500 20h23v4h-23z" fill="#e9407a" />
        </DockItem>
        <DockItem>
          <Parcel />
        </DockItem>
        <DockItem>
          <Parcel />
        </DockItem>
        <div className="ml-[732px]">
          <DockItem>
            <path d="M10 1.500h8v2h-8zM4 3h20v3H4z" fill="#7f9ba6" />
            <path d="M5 6h18v18H5z" fill="#607f8c" />
            <path d="M8 8v15M12 8v15M16 8v15M20 8v15" stroke="#45606c" strokeWidth="1.500" />
          </DockItem>
        </div>
      </div>
    </div>
  );
}

export default function App() {
  return (
    <div className={"h-[768px] w-[1366px] overflow-hidden bg-black " + UI}>
      <SystemBar />
      <div className="relative h-[89px]">
        <SkyTop />
        <TabStrip />
        <Toolbar />
        <BookmarksBar />
      </div>
      <Page />
      <Dock />
    </div>
  );
}
